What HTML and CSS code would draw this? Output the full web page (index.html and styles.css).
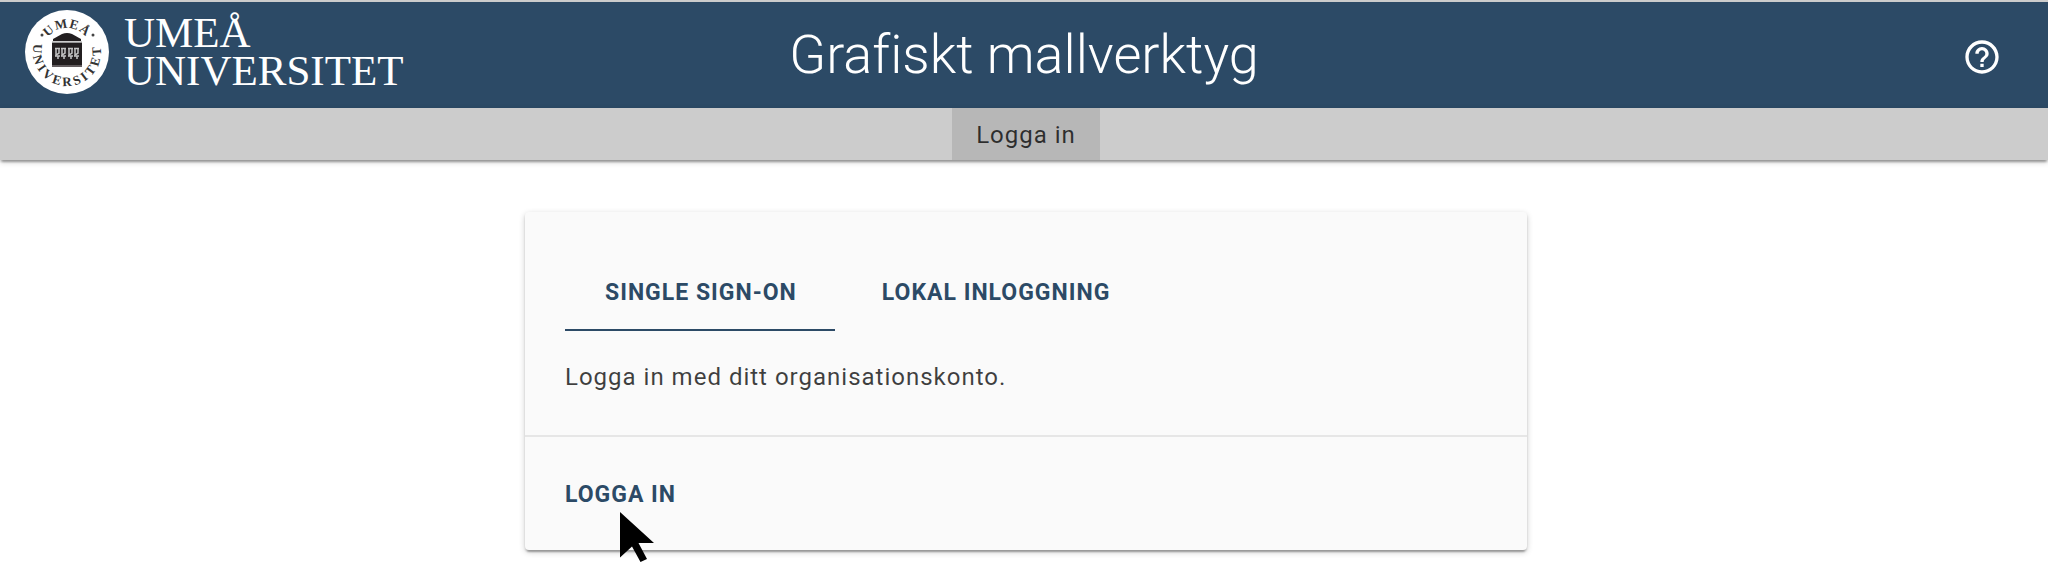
FILE: index.html
```html
<!DOCTYPE html>
<html lang="sv">
<head>
  <meta charset="UTF-8">
  <meta name="viewport" content="width=device-width, initial-scale=1.0">
  <title>Grafiskt mallverktyg</title>
  <link rel="stylesheet" href="styles.css">
</head>
<body>
  <header class="header">
    <a class="logo" href="#">
      <svg class="seal" viewBox="-42 -42 84 84" aria-hidden="true">
        <defs>
          <path id="arc-top" d="M-24 0A24 24 0 0 1 24 0"/>
          <path id="arc-bottom" d="M-31 -14A34 34 0 1 0 31 -14"/>
        </defs>
        <circle r="42" fill="#fff"/>
        <text class="seal-text" text-anchor="middle"><textPath href="#arc-top" startOffset="50%">UMEÅ</textPath></text>
        <text class="seal-text seal-text-wide" text-anchor="middle"><textPath href="#arc-bottom" startOffset="50%">UNIVERSITET</textPath></text>
        <circle cx="-25" cy="-17" r="1.5" fill="#444"/>
        <circle cx="26" cy="-17" r="1.5" fill="#444"/>
        <path d="M-14 -11V-13L-5 -18Q0 -20 5 -18L14 -13V-11Z" fill="#231f20"/>
        <path d="M-15 -10.500H15V-9H-15Z" fill="#999"/>
        <path d="M-15 -9H15V13H-15Z" fill="#231f20"/>
        <path d="M-15 13H15V15H-15Z" fill="#625c5e"/>
        <g fill="none" stroke="#c4c4c4" stroke-width="1.500">
          <path d="M-12 -3.500H-7M-6 -3.500H-1M1 -3.500H6M7 -3.500H12"/>
          <path d="M-11 -3V3L-8 1V-3M-5 -3V3L-2 1V-3M2 -3V3L5 1V-3M8 -3V3L11 1V-3"/>
          <path d="M-12 4H-7M-6 4H-1M1 4H6M7 4H12M-9 4V7M-3 4V7M4 4V7M10 4V7"/>
        </g>
      </svg>
      <span class="wordmark">UMEÅ<br>UNIVERSITET</span>
    </a>
    <h1 class="title">Grafiskt mallverktyg</h1>
    <button type="button" class="help" aria-label="Hjälp">
      <svg viewBox="0 0 24 24" width="40" height="40" aria-hidden="true">
        <path fill="currentColor" d="M11 18h2v-2h-2v2zm1-16C6.480 2 2 6.480 2 12s4.480 10 10 10 10-4.480 10-10S17.520 2 12 2zm0 18c-4.410 0-8-3.590-8-8s3.590-8 8-8 8 3.590 8 8-3.590 8-8 8zm0-14c-2.210 0-4 1.790-4 4h2c0-1.100.9-2 2-2s2 .9 2 2c0 2-3 1.750-3 5h2c0-2.250 3-2.500 3-5 0-2.210-1.790-4-4-4z"/>
      </svg>
    </button>
  </header>

  <nav class="nav">
    <a class="nav-link" href="#">Logga in</a>
  </nav>

  <main class="main">
    <section class="card">
      <div class="card-content">
        <div class="tabs" role="tablist">
          <button type="button" class="tab tab-active" role="tab" aria-selected="true">SINGLE SIGN-ON</button>
          <button type="button" class="tab" role="tab" aria-selected="false">LOKAL INLOGGNING</button>
        </div>
        <p class="card-text">Logga in med ditt organisationskonto.</p>
      </div>
      <div class="card-action">
        <button type="button" class="login">LOGGA IN</button>
        <svg class="pointer" viewBox="0 0 36 52" aria-hidden="true">
          <path d="M0 0L34 31H18.500L27 47L20.500 50L12 34.500L0 45.500Z"/>
        </svg>
      </div>
    </section>
  </main>
</body>
</html>
```

FILE: styles.css
```css
* {
  box-sizing: border-box;
}
body {
  margin: 0;
  background: #fff;
  color: rgba(0, 0, 0, 0.75);
  font-family: Roboto, sans-serif;
  font-size: 24px;
  font-weight: 400;
  line-height: 36px;
  letter-spacing: 1px;
}
button {
  padding: 0;
  border: none;
  background: transparent;
  color: #2c4a66;
  font: inherit;
  letter-spacing: inherit;
  cursor: pointer;
}
a {
  color: inherit;
  text-decoration: none;
}
.header {
  display: grid;
  grid-template-columns: 1fr auto 1fr;
  align-items: center;
  height: 108px;
  padding: 0 25px;
  border-top: 2px solid #ccc;
  background: #2c4a66;
  color: #fff;
}
.logo {
  display: flex;
  align-items: center;
  gap: 15px;
  padding-bottom: 6px;
}
.seal {
  width: 84px;
  height: 84px;
}
.seal-text {
  fill: #333;
  font-family: "Liberation Serif", serif;
  font-size: 13px;
  font-weight: 700;
  letter-spacing: 1px;
}
.seal-text-wide {
  letter-spacing: 3px;
}
.wordmark {
  font-family: "Liberation Serif", serif;
  font-size: 43px;
  font-weight: 400;
  line-height: 38px;
  letter-spacing: 0;
}
.title {
  margin: 0;
  font-size: 54px;
  font-weight: 300;
  line-height: 64px;
  letter-spacing: 0;
  font-variant-ligatures: none;
}
.help {
  display: flex;
  justify-self: end;
  margin-right: 21px;
  padding-top: 4px;
  color: #fff;
}
.nav {
  display: flex;
  justify-content: center;
  padding-left: 4px;
  background: #ccc;
  box-shadow: 0 2px 6px rgba(0, 0, 0, 0.2), 0 2px 2px rgba(0, 0, 0, 0.14), 0 4px 2px -2px rgba(0, 0, 0, 0.2);
}
.nav-link {
  padding: 9px 24px 7px;
  background: #b7b7b7;
}
.main {
  padding: 52px 20px 30px 24px;
}
.card {
  max-width: 1002px;
  margin: 0 auto;
  border-radius: 4px;
  background: #fafafa;
  box-shadow: 0 2px 6px rgba(0, 0, 0, 0.2), 0 2px 2px rgba(0, 0, 0, 0.14), 0 4px 2px -2px rgba(0, 0, 0, 0.2);
}
.card-content {
  padding: 40px;
}
.tabs {
  display: flex;
  gap: 7px;
}
.tab {
  padding: 23px 38px 18px 40px;
  border-bottom: 2px solid transparent;
  font-size: 23px;
  font-weight: 700;
}
.tab-active {
  border-bottom-color: #2c4a66;
}
.card-text {
  margin: 28px 0 0;
}
.card-action {
  position: relative;
  padding: 40px 40px 37px;
  border-top: 2px solid #e6e6e6;
}
.login {
  display: block;
  font-size: 23px;
  font-weight: 700;
}
.pointer {
  position: absolute;
  top: 75px;
  left: 95px;
  width: 36px;
  height: 52px;
}
```
